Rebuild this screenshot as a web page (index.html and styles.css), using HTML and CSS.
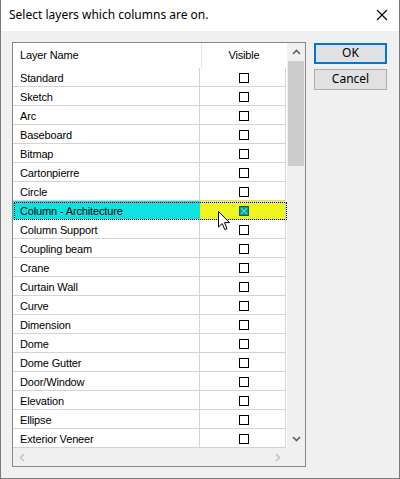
FILE: index.html
```html
<!DOCTYPE html>
<html lang="en">
<head>
    <meta charset="UTF-8">
    <title>Select layers</title>
    <link rel="stylesheet" href="styles.css">
</head>
<body>
<div class="dialog">
    <div class="titlebar">
        <span class="title">Select layers which columns are on.</span>
        <svg class="close" width="12" height="12" viewBox="0 0 12 12">
            <path d="M1 1 L11 11 M11 1 L1 11" stroke="#000" stroke-width="1.1" fill="none"/>
        </svg>
    </div>

    <div class="body">
        <div class="listbox">
            <div class="content">
                <div class="head">
                    <div class="hcell name">Layer Name</div>
                    <div class="hcell vis">Visible</div>
                </div>
                <div class="row"><div class="cell name">Standard</div><div class="cell vis"><span class="box"></span></div></div>
                <div class="row"><div class="cell name">Sketch</div><div class="cell vis"><span class="box"></span></div></div>
                <div class="row"><div class="cell name">Arc</div><div class="cell vis"><span class="box"></span></div></div>
                <div class="row"><div class="cell name">Baseboard</div><div class="cell vis"><span class="box"></span></div></div>
                <div class="row"><div class="cell name">Bitmap</div><div class="cell vis"><span class="box"></span></div></div>
                <div class="row"><div class="cell name">Cartonpierre</div><div class="cell vis"><span class="box"></span></div></div>
                <div class="row"><div class="cell name">Circle</div><div class="cell vis"><span class="box"></span></div></div>
                <div class="row selected">
                    <div class="cell name">Column - Architecture</div>
                    <div class="cell vis">
                        <svg class="checked" width="10" height="10" viewBox="0 0 10 10">
                            <rect x="0.5" y="0.5" width="9" height="9" fill="#1a8c9c" stroke="#0a5f70"/>
                            <path d="M2 2 L8 8 M8 2 L2 8" stroke="#30f0c0" stroke-width="1.2"/>
                        </svg>
                    </div>
                </div>
                <div class="row"><div class="cell name">Column Support</div><div class="cell vis"><span class="box"></span></div></div>
                <div class="row"><div class="cell name">Coupling beam</div><div class="cell vis"><span class="box"></span></div></div>
                <div class="row"><div class="cell name">Crane</div><div class="cell vis"><span class="box"></span></div></div>
                <div class="row"><div class="cell name">Curtain Wall</div><div class="cell vis"><span class="box"></span></div></div>
                <div class="row"><div class="cell name">Curve</div><div class="cell vis"><span class="box"></span></div></div>
                <div class="row"><div class="cell name">Dimension</div><div class="cell vis"><span class="box"></span></div></div>
                <div class="row"><div class="cell name">Dome</div><div class="cell vis"><span class="box"></span></div></div>
                <div class="row"><div class="cell name">Dome Gutter</div><div class="cell vis"><span class="box"></span></div></div>
                <div class="row"><div class="cell name">Door/Window</div><div class="cell vis"><span class="box"></span></div></div>
                <div class="row"><div class="cell name">Elevation</div><div class="cell vis"><span class="box"></span></div></div>
                <div class="row"><div class="cell name">Ellipse</div><div class="cell vis"><span class="box"></span></div></div>
                <div class="row"><div class="cell name">Exterior Veneer</div><div class="cell vis"><span class="box"></span></div></div>
            </div>

            <div class="vscroll">
                <div class="arrow">
                    <svg width="9" height="6" viewBox="0 0 9 6"><path d="M1 5 L4.5 1.5 L8 5" stroke="#606060" stroke-width="1.6" fill="none"/></svg>
                </div>
                <div class="track"><div class="thumb"></div></div>
                <div class="arrow">
                    <svg width="9" height="6" viewBox="0 0 9 6"><path d="M1 1 L4.5 4.5 L8 1" stroke="#606060" stroke-width="1.6" fill="none"/></svg>
                </div>
            </div>

            <div class="hscroll">
                <div class="arrow">
                    <svg width="6" height="9" viewBox="0 0 6 9"><path d="M5 1 L1.5 4.5 L5 8" stroke="#c4c4c4" stroke-width="1.6" fill="none"/></svg>
                </div>
                <div class="arrow">
                    <svg width="6" height="9" viewBox="0 0 6 9"><path d="M1 1 L4.5 4.5 L1 8" stroke="#c4c4c4" stroke-width="1.6" fill="none"/></svg>
                </div>
            </div>
            <div class="corner"></div>
        </div>

        <div class="buttons">
            <button class="btn default">OK</button>
            <button class="btn">Cancel</button>
        </div>
    </div>

    <!-- mouse pointer over the selected row -->
    <svg class="cursor" width="13" height="21" viewBox="0 0 13 21">
        <path d="M0.5 0.5 L0.5 16 L4.2 12.5 L6.8 18.6 L9 17.6 L6.5 11.6 L11.5 11.6 Z" fill="#fff" stroke="#000" stroke-width="1"/>
    </svg>
</div>
</body>
</html>
```

FILE: styles.css
```css
* {
    box-sizing: border-box;
}
html, body {
    margin: 0;
    padding: 0;
}
body {
    width: 400px;
    height: 479px;
    overflow: hidden;
    background: #fff;
}
.dialog {
    position: relative;
    width: 400px;
    height: 479px;
    border: 1px solid #7a7a7a;
    border-top: none;
    background: #f0f0f0;
    display: flex;
    flex-direction: column;
}
.titlebar {
    height: 31px;
    background: #fff;
    display: flex;
    align-items: center;
    justify-content: space-between;
    padding: 0 10px 2px 8px;
}
.title {
    font-family: "Noto Sans", sans-serif;
    font-size: 12px;
    color: #000;
}
.close {
    margin-right: 1px;
}
.body {
    display: flex;
    gap: 8px;
    padding: 11px 0 0 11px;
}

/* list box with its scrollbars */
.listbox {
    width: 294px;
    height: 425px;
    border: 1px solid #828790;
    background: #fff;
    display: grid;
    grid-template-columns: 274px 18px;
    grid-template-rows: 405px 18px;
}
.content {
    overflow: hidden;
    font-family: "Liberation Sans", Arial, sans-serif;
    font-size: 11px;
    letter-spacing: -0.15px;
    color: #000;
}
.head {
    display: flex;
    height: 25px;
    width: 273px;
}
.hcell {
    display: flex;
    align-items: center;
    padding-bottom: 2px;
}
.hcell.name {
    width: 189px;
    padding-left: 7px;
    border-right: 1px solid #e5e5e5;
}
.hcell.vis {
    flex: 1;
    justify-content: center;
}
.row {
    display: flex;
    height: 19px;
    width: 273px;
    border-bottom: 1px solid #d4d4d4;
}
.cell {
    display: flex;
    align-items: center;
    padding-top: 1px;
}
.cell.name {
    width: 187px;
    padding-left: 7px;
    border-right: 1px solid #d4d4d4;
}
.cell.vis {
    flex: 1;
    justify-content: center;
    border-right: 1px solid #d4d4d4;
    padding-left: 2px;
}
.box {
    width: 10px;
    height: 10px;
    border: 1px solid #000;
    background: #fff;
}
.row.selected {
    position: relative;
}
.row.selected .cell.name {
    background: #10e2e2;
    border-right-color: #10e2e2;
}
.row.selected .cell.vis {
    background: #eef520;
}
.row.selected::after {
    content: "";
    position: absolute;
    left: 1px;
    top: 1px;
    right: -1px;
    bottom: -1px;
    border: 1px dotted #000;
}

.vscroll {
    background: #f0f0f0;
    display: flex;
    flex-direction: column;
}
.vscroll .arrow {
    height: 18px;
    display: flex;
    align-items: center;
    justify-content: center;
}
.track {
    flex: 1;
    padding: 0 1px;
}
.thumb {
    height: 105px;
    background: #cdcdcd;
}
.hscroll {
    background: #f0f0f0;
    display: flex;
    justify-content: space-between;
}
.hscroll .arrow {
    width: 18px;
    display: flex;
    align-items: center;
    justify-content: center;
}
.corner {
    background: #f0f0f0;
}

.buttons {
    display: flex;
    flex-direction: column;
    gap: 5px;
    padding-top: 1px;
}
.btn {
    width: 73px;
    height: 21px;
    padding: 0 0 1px;
    border: 1px solid #adadad;
    background: #e1e1e1;
    font-family: "Noto Sans", sans-serif;
    font-size: 12px;
    color: #000;
    line-height: 1;
}
.btn.default {
    border: 2px solid #0078d7;
}

.cursor {
    position: absolute;
    left: 217px;
    top: 211px;
}
```
